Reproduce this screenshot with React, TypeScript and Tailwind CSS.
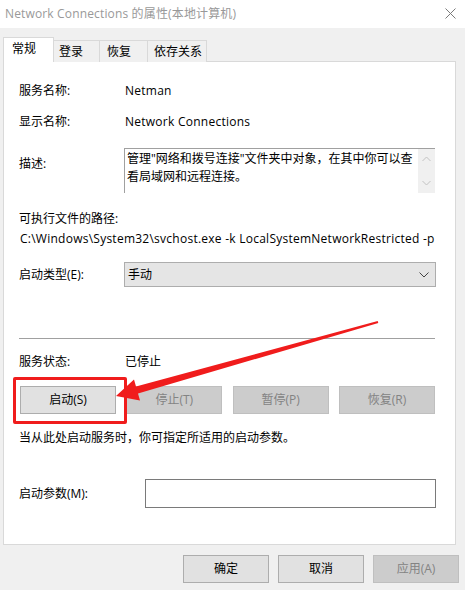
import React from "react";

const font = "font-['Segoe_UI','Open_Sans','Noto_Sans_CJK_SC',sans-serif]";

const tabs = [
  { label: "登录", w: "w-[46px]", pl: "pl-[5px]" },
  { label: "恢复", w: "w-[48px]", pl: "pl-[7px]" },
  { label: "依存关系", w: "w-[59px]", pl: "pl-[6px]" },
];

function Row({ label, children }: { label: string; children: React.ReactNode }) {
  return (
    <div className="flex items-center h-[18px]">
      <span className="w-[105px] shrink-0">{label}</span>
      {children}
    </div>
  );
}

function Btn({ label, disabled, w }: { label: string; disabled?: boolean; w: string }) {
  return (
    <div
      className={`${w} h-[28px] flex items-center justify-center border ${
        disabled ? "bg-[#cccccc] border-[#bfbfbf] text-[#838383]" : "bg-[#e1e1e1] border-[#adadad] text-black"
      }`}
    >
      {label}
    </div>
  );
}

export default function App() {
  return (
    <div className={`relative w-[465px] h-[590px] overflow-hidden bg-[#f0f0f0] text-[12px] leading-[18px] text-black ${font}`}>
      {/* title bar */}
      <div className="h-[28px] bg-white flex items-center justify-between pl-[5px] pr-[9px]">
        <span className="text-[#999999] tracking-[0.15px]">Network Connections 的属性(本地计算机)</span>
        <svg width="11" height="11" viewBox="0 0 11 11" className="mt-[-1px]">
          <path d="M0.5 0.5 L10.5 10.5 M10.5 0.5 L0.5 10.5" stroke="#7a7a7a" strokeWidth="1" />
        </svg>
      </div>

      {/* tabs */}
      <div className="flex items-end pl-[3px] mt-[9px] -mb-px relative z-10">
        <div className="w-[51px] h-[25px] pl-[8px] pt-[2px] bg-white border border-b-0 border-[#d9d9d9]">常规</div>
        {tabs.map((t) => (
          <div
            key={t.label}
            className={`${t.w} ${t.pl} h-[22px] pt-[2px] bg-[#f0f0f0] border border-l-0 border-b-0 border-[#d9d9d9]`}
          >
            {t.label}
          </div>
        ))}
      </div>

      {/* panel */}
      <div className="ml-[3px] w-[453px] h-[484px] bg-white border border-[#d9d9d9] pl-[15px] pr-[20px] pt-[20px]">
        <Row label="服务名称:">
          <span className="pl-px tracking-[0.25px]">Netman</span>
        </Row>
        <div className="mt-[13px]">
          <Row label="显示名称:">
            <span className="pl-px tracking-[0.25px]">Network Connections</span>
          </Row>
        </div>

        <div className="flex mt-[17px]">
          <span className="w-[105px] shrink-0 mt-[7px]">描述:</span>
          <div className="flex-1 h-[45px] border-t border-l border-[#a0a0a0] flex">
            <div className="flex-1 pl-[2px] pt-px">
              管理"网络和拨号连接"文件夹中对象，在其中你可以查看局域网和远程连接。
            </div>
            <div className="w-[17px] bg-[#f0f0f0] flex flex-col items-center justify-between py-[7px]">
              <svg width="9" height="6" viewBox="0 0 9 6">
                <path d="M0.5 5 L4.5 1 L8.5 5" fill="none" stroke="#c2c2c2" strokeWidth="1" />
              </svg>
              <svg width="9" height="6" viewBox="0 0 9 6">
                <path d="M0.5 1 L4.5 5 L8.5 1" fill="none" stroke="#c2c2c2" strokeWidth="1" />
              </svg>
            </div>
          </div>
        </div>

        <div className="mt-[17px]">可执行文件的路径:</div>
        <div className="mt-[2px] pl-px whitespace-nowrap tracking-[0.25px]">
          C:\Windows\System32\svchost.exe -k LocalSystemNetworkRestricted -p
        </div>

        <div className="flex items-center mt-[14px]">
          <span className="w-[105px] shrink-0">启动类型(E):</span>
          <div className="flex-1 h-[25px] bg-[#e5e5e5] border border-[#adadad] flex items-center justify-between pl-[3px] pr-[6px] mr-[-1px]">
            <span>手动</span>
            <svg width="10" height="6" viewBox="0 0 10 6">
              <path d="M0.5 0.5 L5 5 L9.5 0.5" fill="none" stroke="#444" strokeWidth="1" />
            </svg>
          </div>
        </div>

        <div className="mt-[51px] h-px bg-[#a0a0a0]" />

        <div className="mt-[14px]">
          <Row label="服务状态:">
            <span className="pl-px">已停止</span>
          </Row>
        </div>

        <div className="flex justify-between mt-[15px] pl-px">
          <Btn label="启动(S)" w="w-[96px]" />
          <Btn label="停止(T)" w="w-[96px]" disabled />
          <Btn label="暂停(P)" w="w-[96px]" disabled />
          <Btn label="恢复(R)" w="w-[96px]" disabled />
        </div>

        <div className="mt-[15px]">当从此处启动服务时，你可指定所适用的启动参数。</div>

        <div className="flex items-center mt-[32px]">
          <span className="w-[126px] shrink-0">启动参数(M):</span>
          <div className="flex-1 h-[29px] border border-[#7a7a7a] bg-white mr-[-1px]" />
        </div>
      </div>

      {/* bottom buttons */}
      <div className="flex justify-end gap-[9px] pr-[6px] mt-[10px]">
        <Btn label="确定" w="w-[86px]" />
        <Btn label="取消" w="w-[86px]" />
        <Btn label="应用(A)" w="w-[86px]" disabled />
      </div>

      {/* annotation: red box + arrow */}
      <div className="absolute left-[13px] top-[377px] w-[114px] h-[47px] border-[3px] border-[#f01c1c] rounded-[2px] pointer-events-none" />
      <svg className="absolute inset-0 pointer-events-none" width="465" height="590" viewBox="0 0 465 590">
        <polygon
          points="116,396 134,379.4 136,386.6 377.7,321 378.3,323 138,393.4 140,400.6"
          fill="#f01c1c"
        />
      </svg>
    </div>
  );
}
